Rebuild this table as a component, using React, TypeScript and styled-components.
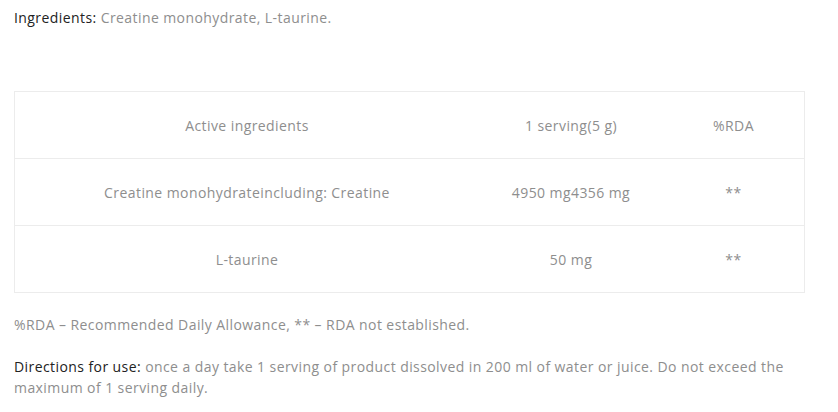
import React from "react";
import styled, { createGlobalStyle } from "styled-components";

const Global = createGlobalStyle`
  html, body { margin: 0; padding: 0; background: #fff; }
  body { font-family: "Open Sans", "Liberation Sans", sans-serif; }
`;

const Page = styled.div`
  width: 791px;
  margin-left: 14px;
  padding-top: 7px;
  font-size: 14px;
  line-height: 21px;
  letter-spacing: 0.42px;
  color: #8e8e8e;
`;

const Para = styled.p<{ $mt?: number }>`
  margin: ${(p) => p.$mt ?? 0}px 0 0 0;
`;

const Label = styled.span`
  color: #222;
`;

const Table = styled.table`
  margin-top: 63px;
  width: 100%;
  border-collapse: collapse;
  border: 1px solid #ececec;
`;

const Row = styled.tr`
  height: 67px;
  border-top: 1px solid #ececec;
`;

const Cell = styled.td<{ $w?: number }>`
  text-align: center;
  vertical-align: middle;
  padding: 0;
  width: ${(p) => (p.$w ? `${p.$w}px` : "auto")};
  color: #8e8e8e;
`;

const rows = [
  ["Active ingredients", "1 serving(5 g)", "%RDA"],
  ["Creatine monohydrateincluding: Creatine", "4950 mg4356 mg", "**"],
  ["L-taurine", "50 mg", "**"],
];

export default function App() {
  return (
    <>
      <Global />
      <Page>
        <Para>
          <Label>Ingredients:</Label> Creatine monohydrate, L-taurine.
        </Para>
        <Table>
          <tbody>
            {rows.map((r, i) => (
              <Row key={i}>
                <Cell $w={464}>{r[0]}</Cell>
                <Cell $w={184}>{r[1]}</Cell>
                <Cell>{r[2]}</Cell>
              </Row>
            ))}
          </tbody>
        </Table>
        <Para $mt={21}>%RDA – Recommended Daily Allowance, ** – RDA not established.</Para>
        <Para $mt={21}>
          <Label>Directions for use:</Label> once a day take 1 serving of product dissolved in 200 ml of water or juice. Do not exceed the maximum of 1 serving daily.
        </Para>
      </Page>
    </>
  );
}
